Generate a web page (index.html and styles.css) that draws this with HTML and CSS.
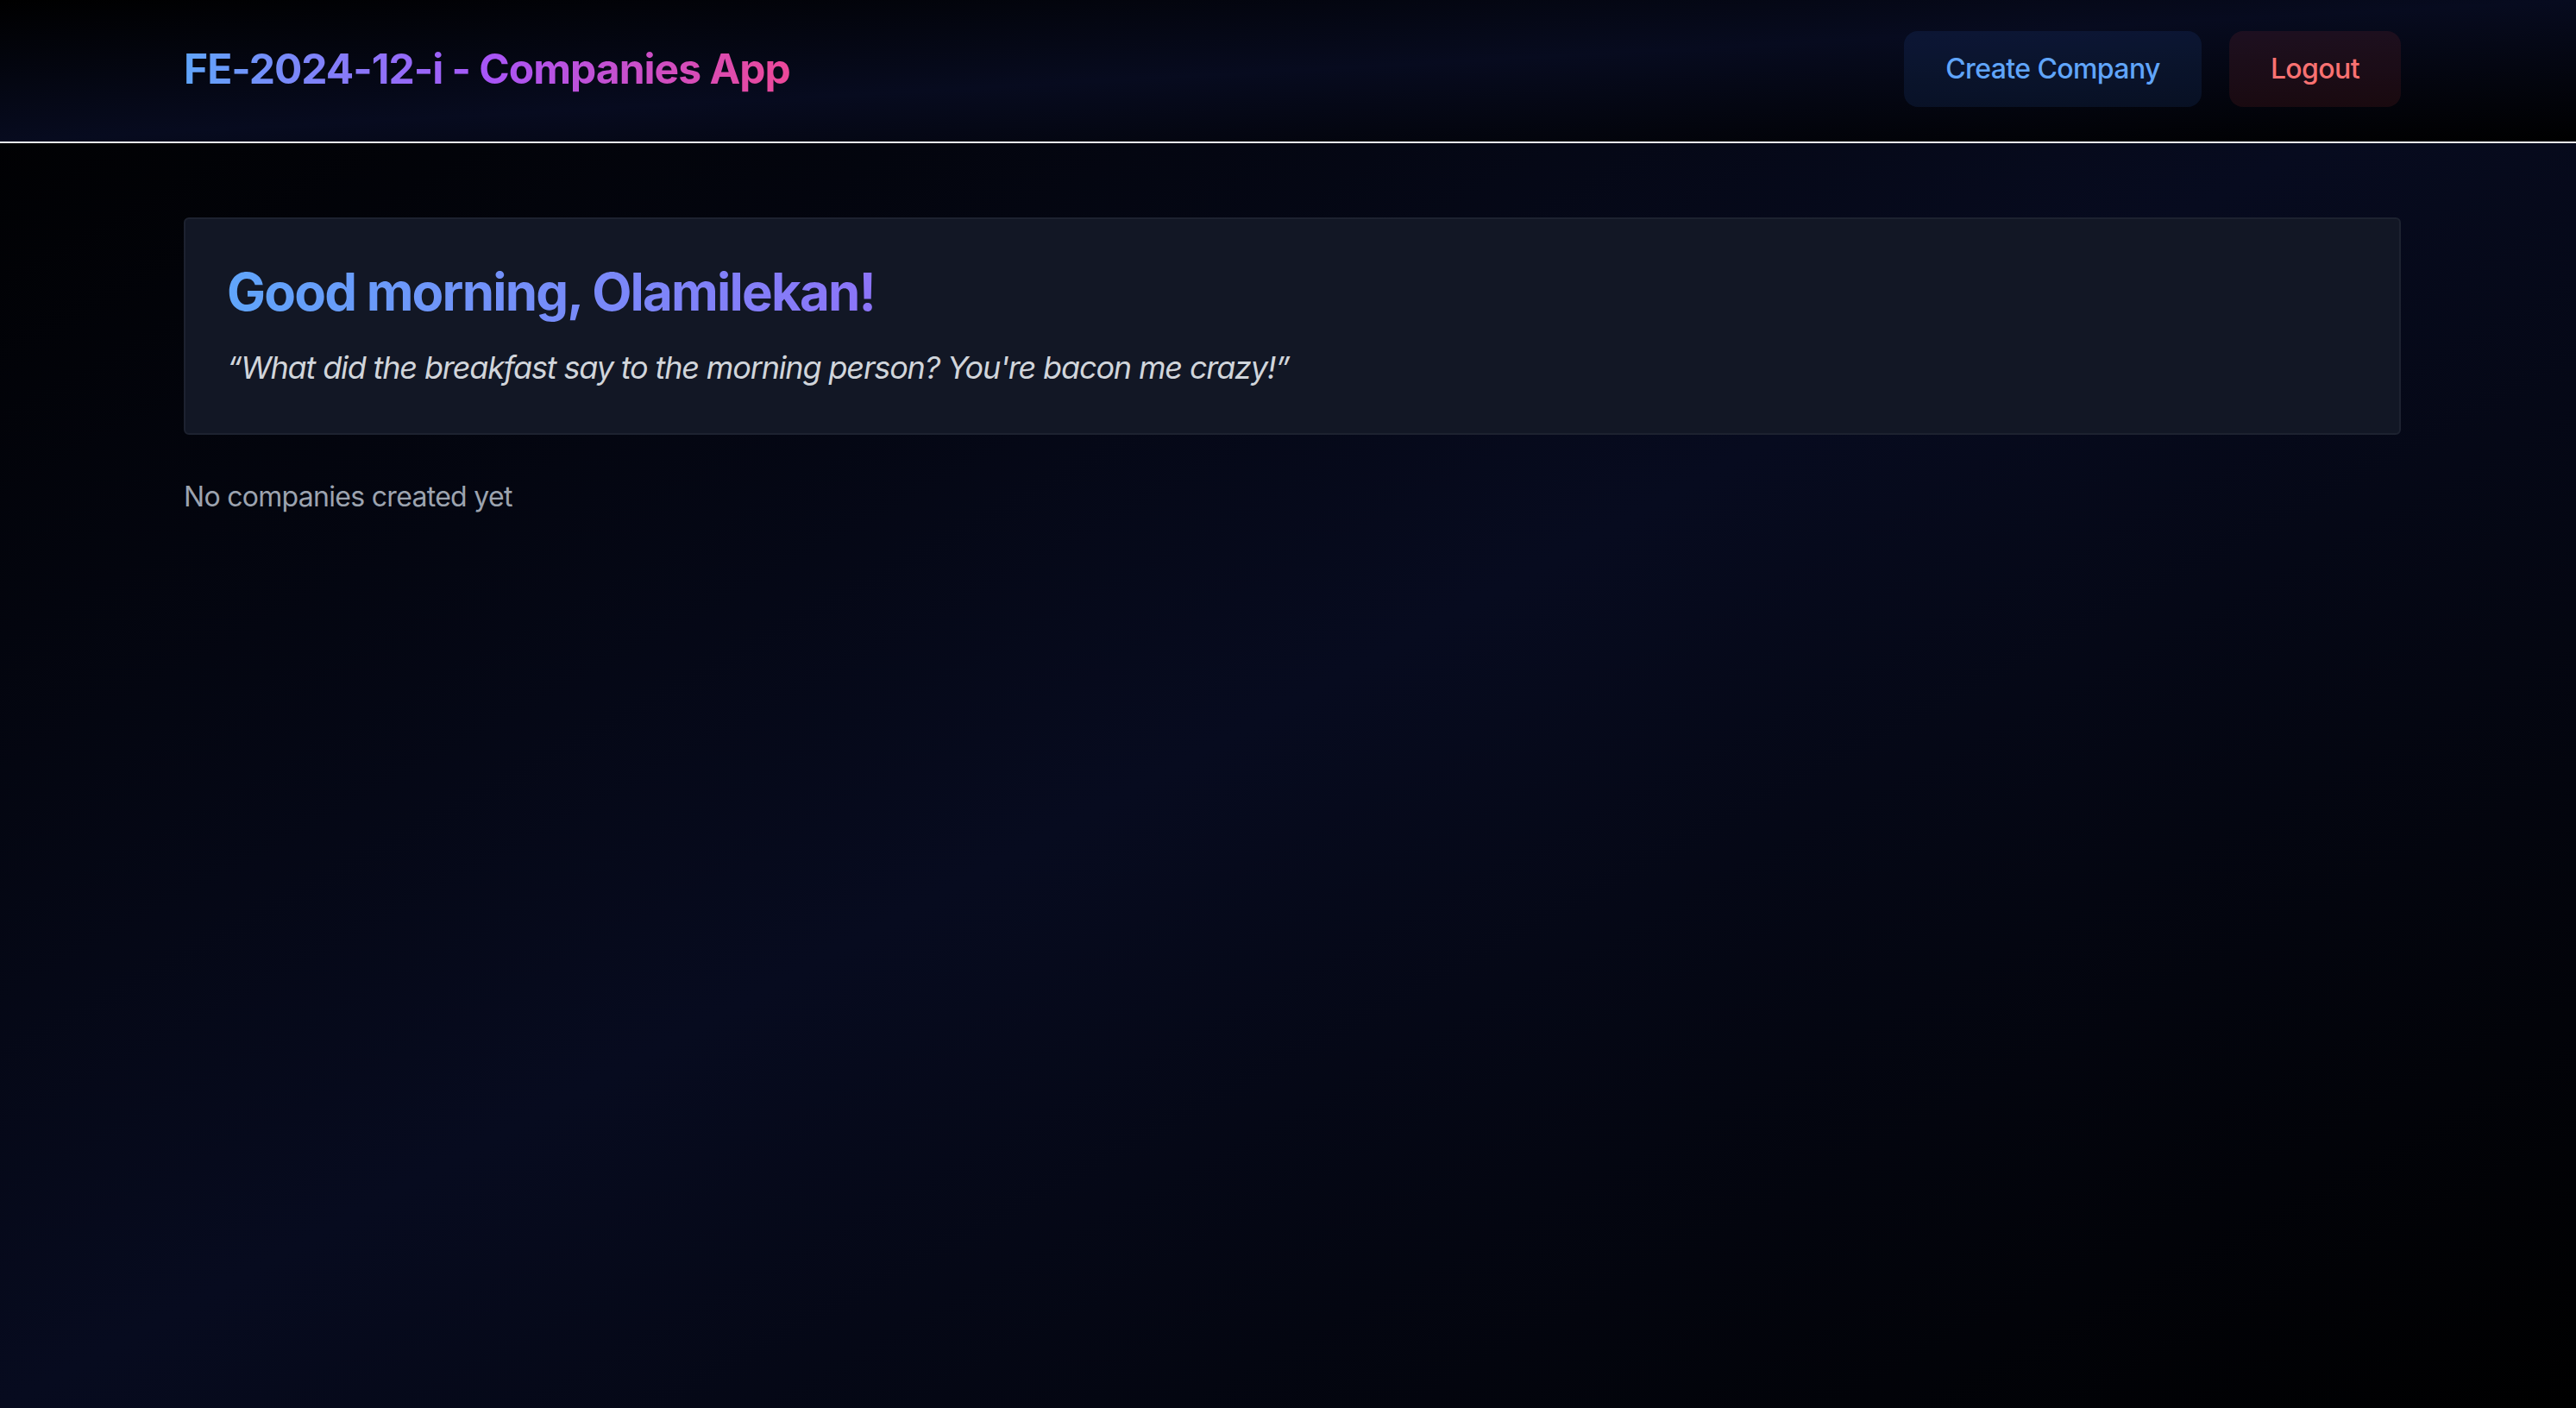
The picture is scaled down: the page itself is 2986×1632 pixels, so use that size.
FILE: index.html
```html
<!DOCTYPE html>
<html lang="en">
<head>
<meta charset="utf-8">
<title>FE-2024-12-i - Companies App</title>
<link rel="stylesheet" href="styles.css">
</head>
<body>
  <header class="topbar">
    <div class="container topbar-inner">
      <h1 class="brand">FE-2024-12-i - Companies App</h1>
      <nav class="actions">
        <button class="btn btn-blue" type="button">Create Company</button>
        <button class="btn btn-red" type="button">Logout</button>
      </nav>
    </div>
  </header>
  <main class="main">
    <div class="container">
      <section class="greeting">
        <h2 class="greeting-title">Good morning, Olamilekan!</h2>
        <p class="greeting-quote">“What did the breakfast say to the morning person? You're bacon me crazy!”</p>
      </section>
      <p class="empty">No companies created yet</p>
    </div>
  </main>
</body>
</html>
```

FILE: styles.css
```css
* {
  box-sizing: border-box;
}

html, body {
  margin: 0;
  padding: 0;
}

body {
  min-height: 1632px;
  font-family: "Inter", "Noto Sans", sans-serif;
  background: linear-gradient(to bottom right, #000000, #070b1f, #000000);
  color: #d1d5db;
}

.container {
  width: 2570px;
  margin: 0 203px 0 213px;
}

.topbar {
  background: linear-gradient(to bottom right, #000000, #070b1f, #000000);
  border-bottom: 2px solid #e8e9ee;
  padding: 36px 0 40px;
}

.topbar-inner {
  display: flex;
  align-items: center;
  justify-content: space-between;
}

.brand {
  margin: 0;
  font-size: 48px;
  line-height: 64px;
  font-weight: 700;
  letter-spacing: -1px;
  display: inline-block;
  background: linear-gradient(to right, #60a5fa, #a855f7, #ec4899);
  -webkit-background-clip: text;
  background-clip: text;
  color: transparent;
}

.actions {
  display: flex;
  gap: 32px;
}

.btn {
  font-family: inherit;
  font-size: 32px;
  line-height: 48px;
  font-weight: 500;
  letter-spacing: -0.6px;
  padding: 20px 48px;
  border: none;
  border-radius: 16px;
  cursor: pointer;
}

.btn-blue {
  background: rgba(59, 130, 246, 0.1);
  color: #60a5fa;
}

.btn-red {
  background: rgba(239, 68, 68, 0.1);
  color: #f87171;
}

.main {
  padding-top: 86px;
}

.greeting {
  background: #121725;
  border: 2px solid #1d2230;
  border-radius: 6px;
  padding: 48px;
  margin-bottom: 48px;
}

.greeting-title {
  margin: 0 0 24px;
  font-size: 60px;
  line-height: 72px;
  font-weight: 700;
  letter-spacing: -1.8px;
  background: linear-gradient(to right, #60a5fa, #a855f7, #ec4899);
  -webkit-background-clip: text;
  background-clip: text;
  color: transparent;
}

.greeting-quote {
  margin: 0;
  font-size: 36px;
  line-height: 56px;
  font-style: italic;
  letter-spacing: -1.15px;
  color: #d1d5db;
}

.empty {
  margin: 0;
  font-size: 32px;
  line-height: 48px;
  letter-spacing: -0.7px;
  color: #9ca3af;
}
```
